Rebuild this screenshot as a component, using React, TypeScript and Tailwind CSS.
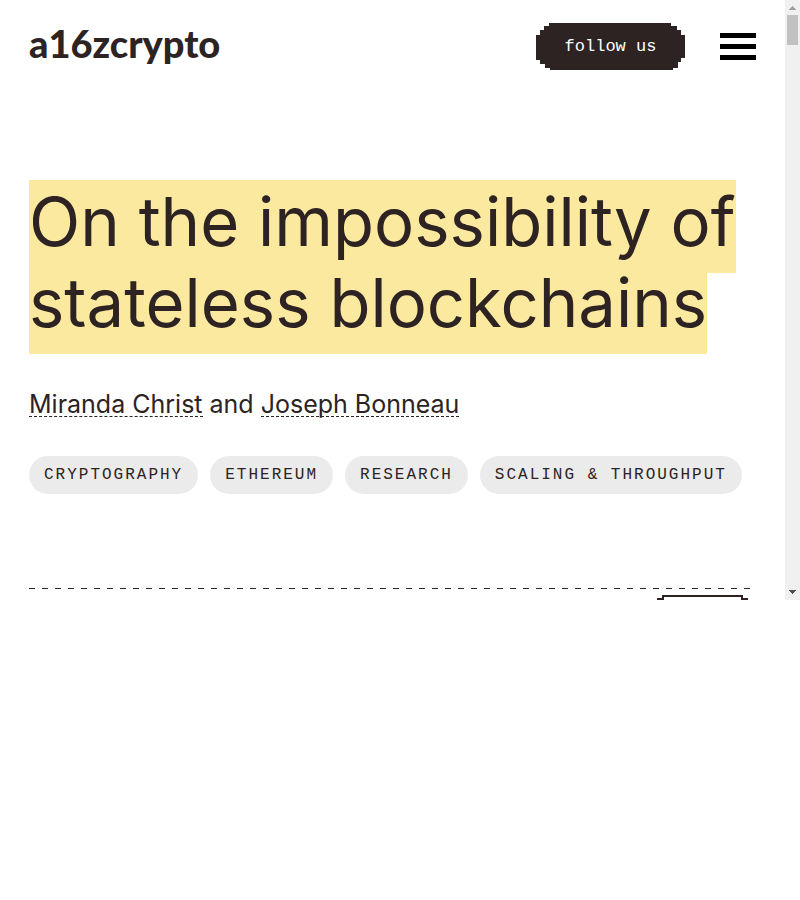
import React from "react";

const TAGS = ["Cryptography", "Ethereum", "Research", "Scaling & Throughput"];

function Logo() {
  return (
    <a
      href="#home"
      className="pb-2 font-['Lato',sans-serif] text-[38px] leading-[44px] font-black text-[#2d2323]"
    >
      a16zcrypto
    </a>
  );
}

function FollowButton() {
  return (
    <button
      type="button"
      className="relative h-[47px] w-[149px] cursor-pointer font-['Liberation_Mono',monospace] text-[17px] leading-6 text-white"
    >
      <svg
        className="absolute inset-0 h-full w-full"
        viewBox="0 0 149 47"
        fill="#2d2323"
        shapeRendering="crispEdges"
        aria-hidden="true"
      >
        <path d="M13 0H135V3H141V7H145V12H149V35H145V39H142V45H137V47H14V45H9V41H4V37H0V12H4V7H8V3H13Z" />
      </svg>
      <span className="relative">follow us</span>
    </button>
  );
}

function MenuButton() {
  return (
    <button type="button" aria-label="Open menu" className="flex w-9 cursor-pointer flex-col gap-[6px]">
      <span className="h-[5px] w-full bg-black" />
      <span className="h-[5px] w-full bg-black" />
      <span className="h-[5px] w-full bg-black" />
    </button>
  );
}

function AuthorLink({ href, children }: { href: string; children: React.ReactNode }) {
  return (
    <a href={href} className="inline-block border-b border-dashed border-[#2d2323] leading-6">
      {children}
    </a>
  );
}

function Scrollbar() {
  return (
    <div className="flex w-[15px] shrink-0 flex-col items-center bg-[#f0f0f0]" aria-hidden="true">
      <svg className="h-[15px] w-[15px]" viewBox="0 0 15 15" fill="#a0a0a0" shapeRendering="crispEdges">
        <path d="M7 6h1v1h1v1h1v1h1v1H4V9h1V8h1V7h1z" />
      </svg>
      <div className="h-[30px] w-[11px] bg-[#c1c1c1]" />
      <svg className="mt-auto h-[15px] w-[15px]" viewBox="0 0 15 15" fill="#505050" shapeRendering="crispEdges">
        <path d="M4 5h7v1h-1v1h-1v1h-1v1h-1v-1h-1v-1h-1v-1h-1z" />
      </svg>
    </div>
  );
}

export default function App() {
  return (
    <div className="flex bg-white font-['Inter',sans-serif] text-[#2d2323]">
      <div className="min-w-0 flex-1 px-[29px]">
        <header className="flex h-[93px] items-center justify-between">
          <Logo />
          <div className="flex items-center gap-[35px]">
            <FollowButton />
            <MenuButton />
          </div>
        </header>

        <main>
          <h1 className="mt-[88px] text-[67px] leading-[81px] font-normal">
            <span className="box-decoration-clone bg-[#fae99e] pt-px pb-[11px]">
              On the impossibility of stateless blockchains
            </span>
          </h1>

          <p className="mt-[45px] text-[25px] leading-8">
            <AuthorLink href="#miranda-christ">Miranda Christ</AuthorLink> and{" "}
            <AuthorLink href="#joseph-bonneau">Joseph Bonneau</AuthorLink>
          </p>

          <ul className="mt-9 flex flex-wrap gap-3">
            {TAGS.map((tag) => (
              <li key={tag}>
                <a
                  href="#tags"
                  className="block rounded-full bg-[#ebebeb] px-[15px] py-[7px] font-['Liberation_Mono',monospace] text-base leading-6 tracking-[2px] uppercase"
                >
                  {tag}
                </a>
              </li>
            ))}
          </ul>

          <div className="mt-[94px] h-px bg-[repeating-linear-gradient(90deg,#2d2323_0_6px,transparent_6px_13px)]" />
          <div className="flex h-[11px] justify-end overflow-hidden pt-[6px] pr-[8px]">
            <svg
              className="h-[5px] w-[91px]"
              viewBox="0 0 91 5"
              fill="none"
              stroke="#2d2323"
              strokeWidth="2"
              aria-hidden="true"
            >
              <path d="M0 4H6V1H85V4H91" />
            </svg>
          </div>
        </main>
      </div>
      <Scrollbar />
    </div>
  );
}
